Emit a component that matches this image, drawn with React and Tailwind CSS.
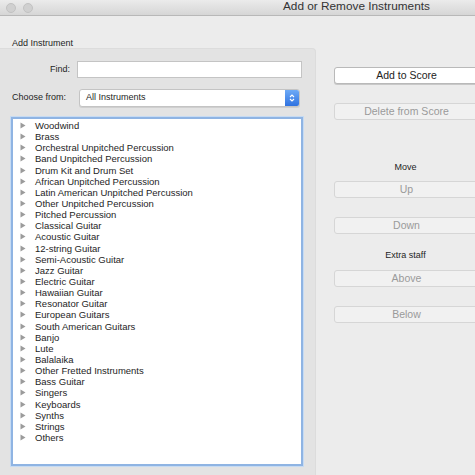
import React from 'react';

const items = [
  'Woodwind',
  'Brass',
  'Orchestral Unpitched Percussion',
  'Band Unpitched Percussion',
  'Drum Kit and Drum Set',
  'African Unpitched Percussion',
  'Latin American Unpitched Percussion',
  'Other Unpitched Percussion',
  'Pitched Percussion',
  'Classical Guitar',
  'Acoustic Guitar',
  '12-string Guitar',
  'Semi-Acoustic Guitar',
  'Jazz Guitar',
  'Electric Guitar',
  'Hawaiian Guitar',
  'Resonator Guitar',
  'European Guitars',
  'South American Guitars',
  'Banjo',
  'Lute',
  'Balalaika',
  'Other Fretted Instruments',
  'Bass Guitar',
  'Singers',
  'Keyboards',
  'Synths',
  'Strings',
  'Others',
];

const Button = ({ label, disabled, className = '' }) => (
  <div
    className={`h-[17px] w-[160px] rounded-[3px] border flex items-center justify-start text-[10.5px] ${
      disabled
        ? 'bg-[#f1f1f1] border-[#d6d6d6] text-[#9a9a9a]'
        : 'bg-white border-[#b9b9b9] text-[#222] shadow-[0_1px_0_#c8c8c8]'
    } ${className}`}
  >
    <span className="w-[143px] text-center">{label}</span>
  </div>
);

const Triangle = () => (
  <svg width="6" height="7" viewBox="0 0 6 7" className="shrink-0">
    <path d="M0.5 0.5 L5.5 3.5 L0.5 6.5 Z" fill="#9b9b9b" />
  </svg>
);

export default function App() {
  return (
    <div
      className="w-[475px] h-[475px] overflow-hidden bg-[#ececec] text-[#1e1e1e]"
      style={{ fontFamily: '"Liberation Sans", Arial, sans-serif' }}
    >
      {/* title bar */}
      <div className="h-[16px] flex items-center bg-gradient-to-b from-[#ebebeb] to-[#d6d6d6] border-b border-[#b8b8b8]">
        <div className="flex gap-[7px] pl-[6px]">
          <span className="w-[10px] h-[10px] rounded-full bg-[#d0d0d0] border border-[#c2c2c2]" />
          <span className="w-[10px] h-[10px] rounded-full bg-[#d0d0d0] border border-[#c2c2c2]" />
        </div>
        <div className="ml-[250px] text-[11.8px] text-[#333] leading-none pb-[1px] whitespace-nowrap">
          Add or Remove Instruments
        </div>
      </div>

      <div className="flex">
        {/* left group */}
        <div className="w-[316px] shrink-0">
          <div className="pl-[12px] pt-[22px] text-[9px] leading-[10px]">Add Instrument</div>
          <div className="h-[427px] bg-[#e3e3e3] border-t border-r border-[#dcdcdc] rounded-tr-[4px] flex flex-col">
            <div className="flex items-center mt-[12px]">
              <div className="w-[70px] text-right text-[9px]">Find:</div>
              <div className="ml-[7px] w-[225px] h-[17px] bg-white border border-[#c4c4c4]" />
            </div>
            <div className="flex items-center mt-[11px]">
              <div className="pl-[12px] w-[79px] text-[9px]">Choose from:</div>
              <div className="w-[221px] h-[18px] bg-white border border-[#c4c4c4] rounded-[3px] flex items-center overflow-hidden shadow-[0_1px_0_#cfcfcf]">
                <span className="flex-1 pl-[6px] text-[9px]">All Instruments</span>
                <div className="w-[14px] h-full bg-gradient-to-b from-[#6eaaf6] to-[#2f72e0] flex items-center justify-center">
                  <svg width="6" height="10" viewBox="0 0 6 10">
                    <path d="M1 4 L3 2 L5 4 M1 6 L3 8 L5 6" stroke="white" strokeWidth="1.1" fill="none" />
                  </svg>
                </div>
              </div>
            </div>
            <div className="ml-[11px] mt-[10px] w-[292px] h-[349px] bg-white border-2 border-[#8fb4e3] shadow-[0_0_0_1px_#c6dbf3] pt-[1px]">
              {items.map((it) => (
                <div key={it} className="flex items-center h-[11.15px] text-[9.5px] leading-[11.15px] pl-[7px]">
                  <Triangle />
                  <span className="ml-[9px] whitespace-nowrap">{it}</span>
                </div>
              ))}
            </div>
          </div>
        </div>

        {/* right buttons */}
        <div className="ml-[18px] shrink-0 flex flex-col">
          <Button label="Add to Score" className="mt-[51px]" />
          <Button label="Delete from Score" disabled className="mt-[19px]" />
          <div className="mt-[42px] w-[143px] text-center text-[9px] leading-[10px]">Move</div>
          <Button label="Up" disabled className="mt-[9px]" />
          <Button label="Down" disabled className="mt-[19px]" />
          <div className="mt-[16px] w-[143px] text-center text-[9px] leading-[10px]">Extra staff</div>
          <Button label="Above" disabled className="mt-[10px]" />
          <Button label="Below" disabled className="mt-[19px]" />
        </div>
      </div>
    </div>
  );
}
